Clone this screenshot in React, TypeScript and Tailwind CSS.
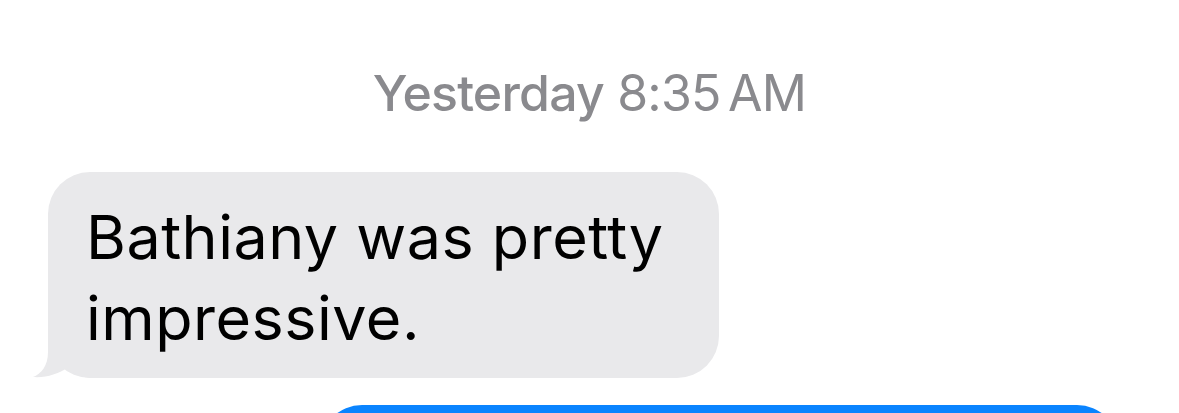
import React from "react";

export default function App() {
  return (
    <div
      className="w-full h-[413px] overflow-hidden bg-white flex flex-col"
      style={{ fontFamily: "Inter, 'Noto Sans', sans-serif" }}
    >
      <div className="pt-[63px] text-center text-[50px] leading-[60px] text-[#8a8a8e] tracking-[-0.8px]">
        <span className="font-medium">Yesterday</span>{" "}
        <span className="font-normal">8:35{"\u2006"}AM</span>
      </div>

      <div className="mt-[49px] pl-[48px] flex">
        <div className="relative w-[671px] bg-[#e9e9eb] rounded-[42px] pl-[38px] pr-[30px] pt-[25px] pb-[19px] text-[61px] leading-[81px] text-black tracking-[0.5px]">
          <svg
            className="absolute left-[-20px] bottom-0"
            width="80"
            height="50"
            viewBox="0 0 80 50"
          >
            <path
              d="M20 0 L20 24 C20 38 13 46 5 49 C18 50 30 46 39 40 C46 46 54 50 66 50 L80 50 L80 0 Z"
              fill="#e9e9eb"
            />
          </svg>
          <span className="relative">Bathiany was pretty impressive.</span>
        </div>
      </div>

      <div className="mt-[27px] pl-[320px] flex">
        <div className="w-[799px] h-[200px] shrink-0 bg-[#0a84ff] rounded-[42px]" />
      </div>
    </div>
  );
}
